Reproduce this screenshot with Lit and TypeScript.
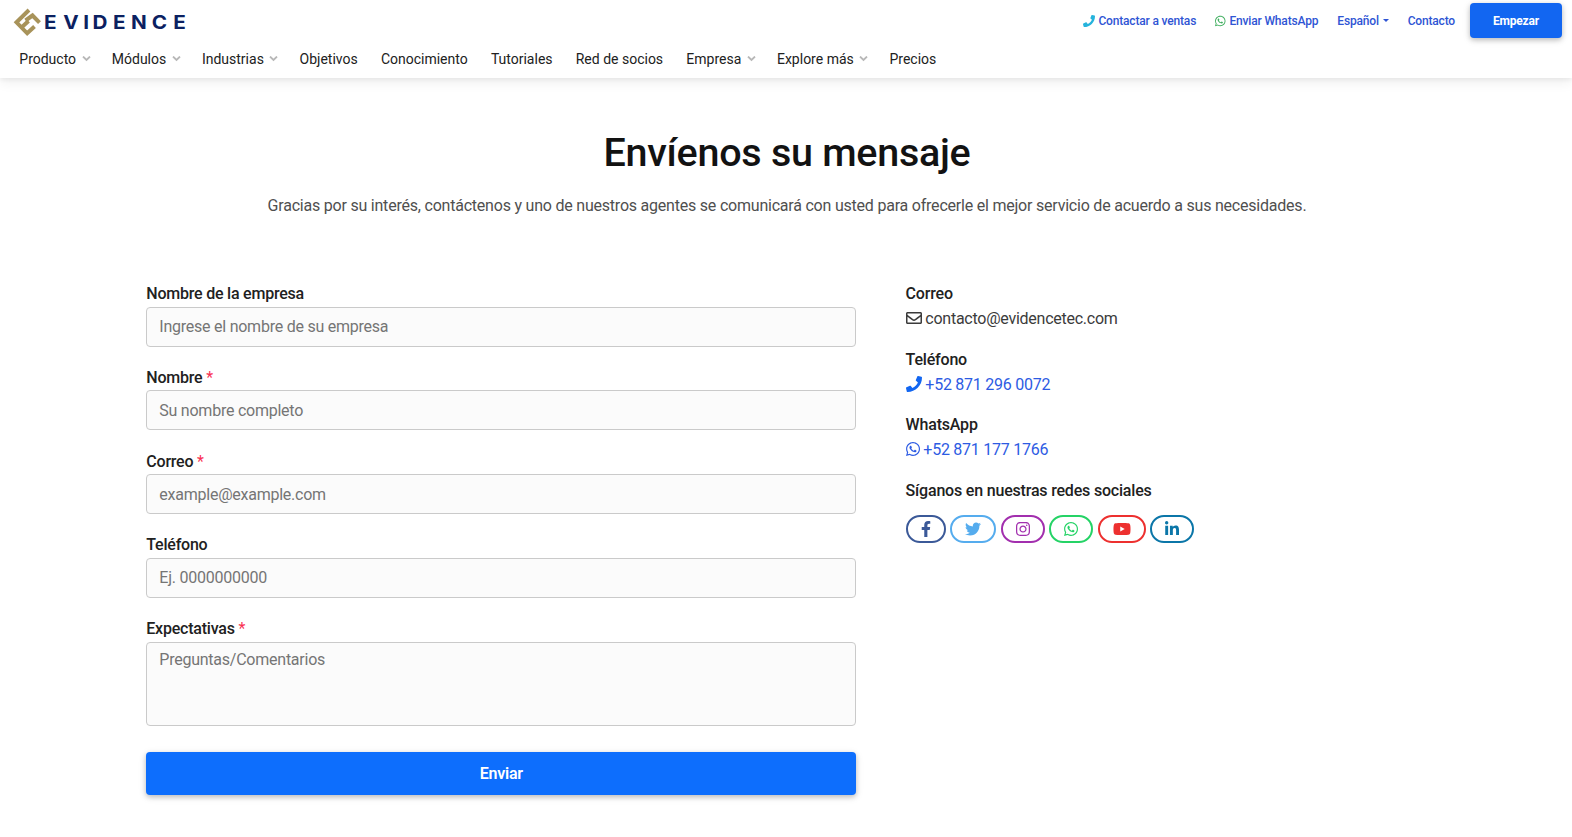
import { LitElement, html, svg, css, nothing } from 'lit';
import { customElement, property } from 'lit/decorators.js';

// [viewBox width, path], all icons share a 512 unit height
const ICONS: Record<string, [number, string]> = {
  phone: [512, 'M493.4 24.6l-104-24c-11.3-2.6-22.9 3.3-27.5 13.9l-48 112c-4.2 9.8-1.4 21.3 6.9 28l60.6 49.6c-36 76.7-98.9 140.5-177.2 177.2l-49.6-60.6c-6.8-8.3-18.2-11.1-28-6.9l-112 48C3.9 366.5-2 378.1.6 389.4l24 104C27.1 504.2 36.7 512 48 512c256.1 0 464-207.5 464-464 0-11.2-7.7-20.9-18.6-23.4z'],
  whatsapp: [448, 'M380.9 97.1C339 55.1 283.2 32 223.9 32c-122.4 0-222 99.6-222 222 0 39.1 10.2 77.3 29.6 111L0 480l117.7-30.9c32.4 17.7 68.9 27 106.1 27h.1c122.3 0 224.1-99.6 224.1-222 0-59.3-25.2-115-67.1-157zm-157 341.6c-33.2 0-65.7-8.9-94-25.7l-6.7-4-69.8 18.3L72 359.2l-4.4-7c-18.5-29.4-28.2-63.3-28.2-98.2 0-101.7 82.8-184.5 184.6-184.5 49.3 0 95.6 19.2 130.4 54.1 34.8 34.9 56.2 81.2 56.1 130.5 0 101.8-84.9 184.6-186.6 184.6zm101.2-138.2c-5.5-2.8-32.8-16.2-37.9-18-5.1-1.9-8.8-2.8-12.5 2.8-3.7 5.6-14.3 18-17.6 21.8-3.2 3.7-6.5 4.2-12 1.4-32.6-16.3-54-29.1-75.5-66-5.7-9.8 5.7-9.1 16.3-30.3 1.8-3.7.9-6.9-.5-9.7-1.4-2.8-12.5-30.1-17.1-41.2-4.5-10.8-9.1-9.3-12.5-9.5-3.2-.2-6.9-.2-10.6-.2-3.7 0-9.7 1.4-14.8 6.9-5.1 5.6-19.4 19-19.4 46.3 0 27.3 19.9 53.7 22.6 57.4 2.8 3.7 39.1 59.7 94.8 83.8 35.2 15.2 49 16.5 66.6 13.9 10.7-1.6 32.8-13.4 37.4-26.4 4.6-13 4.6-24.1 3.2-26.4-1.3-2.5-5-3.9-10.5-6.6z'],
  envelope: [512, 'M464 64H48C21.490 64 0 85.490 0 112v288c0 26.510 21.490 48 48 48h416c26.510 0 48-21.490 48-48V112c0-26.510-21.490-48-48-48zm0 48v40.805c-22.422 18.259-58.168 46.651-134.587 106.490-16.841 13.247-50.201 45.072-73.413 44.701-23.208.375-56.579-31.459-73.413-44.701C106.180 199.465 70.425 171.067 48 152.805V112h416zM48 400V214.398c22.914 18.251 55.409 43.862 104.938 82.646 21.857 17.205 60.134 55.186 103.062 54.955 42.717.231 80.509-37.199 103.053-54.947 49.528-38.783 82.032-64.401 104.947-82.653V400H48z'],
  facebook: [320, 'M279.140 288l14.220-92.660h-88.910v-60.130c0-25.350 12.420-50.060 52.240-50.060h40.420V6.260S260.430 0 225.360 0c-73.220 0-121.080 44.380-121.080 124.720v70.620H22.890V288h81.390v224h100.170V288z'],
  twitter: [512, 'M459.370 151.716c.325 4.548.325 9.097.325 13.645 0 138.720-105.583 298.558-298.558 298.558-59.452 0-114.680-17.219-161.137-47.106 8.447.974 16.568 1.299 25.340 1.299 49.055 0 94.213-16.568 130.274-44.832-46.132-.975-84.792-31.188-98.112-72.772 6.498.974 12.995 1.624 19.818 1.624 9.421 0 18.843-1.300 27.614-3.573-48.081-9.747-84.143-51.980-84.143-102.985v-1.299c13.969 7.797 30.214 12.670 47.431 13.319-28.264-18.843-46.781-51.005-46.781-87.391 0-19.492 5.197-37.360 14.294-52.954 51.655 63.675 129.300 105.258 216.365 109.807-1.624-7.797-2.599-15.918-2.599-24.040 0-57.828 46.782-104.934 104.934-104.934 30.213 0 57.502 12.670 76.670 33.137 23.715-4.548 46.456-13.320 66.599-25.340-7.798 24.366-24.366 44.833-46.132 57.827 21.117-2.273 41.584-8.122 60.426-16.243-14.292 20.791-32.161 39.308-52.628 54.253z'],
  instagram: [448, 'M224.1 141c-63.6 0-114.9 51.3-114.9 114.9s51.3 114.9 114.9 114.9S339 319.5 339 255.9 287.7 141 224.1 141zm0 189.6c-41.1 0-74.7-33.5-74.7-74.7s33.5-74.7 74.7-74.7 74.7 33.5 74.7 74.7-33.6 74.7-74.7 74.7zm146.4-194.3c0 14.9-12 26.8-26.8 26.8-14.9 0-26.8-12-26.8-26.8s12-26.8 26.8-26.8 26.8 12 26.8 26.8zm76.1 27.2c-1.7-35.9-9.9-67.7-36.2-93.9-26.2-26.2-58-34.4-93.9-36.2-37-2.1-147.9-2.1-184.9 0-35.8 1.7-67.6 9.9-93.9 36.1s-34.4 58-36.2 93.9c-2.1 37-2.1 147.9 0 184.9 1.7 35.9 9.9 67.7 36.2 93.9s58 34.4 93.9 36.2c37 2.1 147.9 2.1 184.9 0 35.9-1.7 67.7-9.9 93.9-36.2 26.2-26.2 34.4-58 36.2-93.9 2.1-37 2.1-147.8 0-184.8zM398.8 388c-7.8 19.6-22.9 34.7-42.6 42.6-29.5 11.7-99.5 9-132.1 9s-102.7 2.6-132.1-9c-19.6-7.8-34.7-22.9-42.6-42.6-11.7-29.5-9-99.5-9-132.1s-2.6-102.7 9-132.1c7.8-19.6 22.9-34.7 42.6-42.6 29.5-11.7 99.5-9 132.1-9s102.7-2.6 132.1 9c19.6 7.8 34.7 22.9 42.6 42.6 11.7 29.5 9 99.5 9 132.1s2.7 102.7-9 132.1z'],
  youtube: [576, 'M549.655 124.083c-6.281-23.650-24.787-42.276-48.284-48.597C458.781 64 288 64 288 64S117.220 64 74.629 75.486c-23.497 6.322-42.003 24.947-48.284 48.597-11.412 42.867-11.412 132.305-11.412 132.305s0 89.438 11.412 132.305c6.281 23.650 24.787 41.500 48.284 47.821C117.220 448 288 448 288 448s170.780 0 213.371-11.486c23.497-6.321 42.003-24.171 48.284-47.821 11.412-42.867 11.412-132.305 11.412-132.305s0-89.438-11.412-132.305zm-317.510 213.508V175.185l142.739 81.205-142.739 81.201z'],
  linkedin: [448, 'M100.280 448H7.400V148.900h92.880zM53.790 108.100C24.090 108.100 0 83.500 0 53.800a53.790 53.790 0 0 1 107.580 0c0 29.700-24.100 54.300-53.790 54.300zM447.900 448h-92.680V302.400c0-34.700-.7-79.200-48.290-79.200-48.290 0-55.690 37.700-55.690 76.700V448h-92.780V148.900h89.080v40.800h1.300c12.400-23.500 42.690-48.300 87.880-48.300 94 0 111.280 61.900 111.280 142.300V448z'],
};

const NAV = [
  { label: 'Producto', menu: true },
  { label: 'Módulos', menu: true },
  { label: 'Industrias', menu: true },
  { label: 'Objetivos' },
  { label: 'Conocimiento' },
  { label: 'Tutoriales' },
  { label: 'Red de socios' },
  { label: 'Empresa', menu: true },
  { label: 'Explore más', menu: true },
  { label: 'Precios' },
];

const FIELDS = [
  { label: 'Nombre de la empresa', placeholder: 'Ingrese el nombre de su empresa' },
  { label: 'Nombre', placeholder: 'Su nombre completo', required: true },
  { label: 'Correo', placeholder: 'example@example.com', required: true },
  { label: 'Teléfono', placeholder: 'Ej. 0000000000' },
  { label: 'Expectativas', placeholder: 'Preguntas/Comentarios', required: true, multiline: true },
];

const SOCIAL = ['facebook', 'twitter', 'instagram', 'whatsapp', 'youtube', 'linkedin'];

@customElement('app-icon')
export class AppIcon extends LitElement {
  @property() name = '';

  static styles = css`
    :host {
      display: inline-block;
      height: 1em;
      line-height: 1;
      vertical-align: -0.125em;
    }

    .glyph {
      display: block;
      height: 1em;
      fill: currentColor;
      overflow: visible;
    }
  `;

  render() {
    const [width, path] = ICONS[this.name];
    return html`<svg class="glyph" viewBox="0 0 ${width} 512">${svg`<path d=${path}></path>`}</svg>`;
  }
}

@customElement('site-header')
export class SiteHeader extends LitElement {
  static styles = css`
    :host {
      display: block;
      height: 78px;
      background: #fff;
      box-shadow: 0 4px 12px rgba(0, 0, 0, 0.07), 0 2px 4px rgba(0, 0, 0, 0.05);
      font-family: Roboto, sans-serif;
    }

    .top {
      display: flex;
      justify-content: space-between;
      align-items: flex-start;
      height: 42px;
      padding: 3px 10px 0 13px;
      box-sizing: border-box;
    }

    .logo {
      display: block;
      margin-top: 4px;
    }

    .word {
      font: 700 18.800px Inter, sans-serif;
      fill: #0b2161;
    }

    .links {
      display: flex;
      align-items: center;
      height: 35px;
      font-size: 12px;
      font-weight: 500;
      letter-spacing: -0.170px;
    }

    .links a {
      display: flex;
      align-items: center;
      gap: 3.800px;
      margin-right: 19px;
      color: #2f55d4;
      text-decoration: none;
    }

    .links a.last {
      margin-right: 15px;
    }

    .cyan {
      color: #25b3dc;
    }

    .green {
      color: #3fae5e;
    }

    .caret {
      border: 3.500px solid transparent;
      border-top-color: currentColor;
      border-bottom: 0;
    }

    .start {
      width: 92px;
      height: 35px;
      padding: 0;
      border: 0;
      border-radius: 4px;
      background: #1266f1;
      box-shadow: 0 2px 5px rgba(0, 0, 0, 0.2), 0 2px 8px rgba(0, 0, 0, 0.1);
      color: #fff;
      font: 700 12px Roboto, sans-serif;
      letter-spacing: -0.200px;
    }

    .nav {
      display: flex;
      gap: 23.200px;
      padding-left: 19.300px;
      font-size: 14px;
      line-height: 34px;
      color: #212121;
    }

    .item {
      display: flex;
      align-items: center;
      gap: 5.500px;
      white-space: nowrap;
    }

    .chevron {
      margin-right: -2px;
      fill: none;
      stroke: #b8b8b8;
      stroke-width: 1.800;
    }
  `;

  render() {
    return html`
      <div class="top">
        <svg class="logo" width="174" height="30" viewBox="13 7 174 30">
          <g fill="none" stroke="#a8935a" stroke-width="4">
            <path d="M29 10L16.500 22.300L27.200 33.300L34.500 26.500"></path>
            <path d="M21.500 27.500L28.500 21"></path>
            <path d="M25.500 20.500L32.500 15.500L39.500 22.700"></path>
          </g>
          <text class="word" transform="scale(1.1 1)" y="29.300" x="40 57.600 75.700 84 102.700 119 138 157.400">EVIDENCE</text>
        </svg>
        <div class="links">
          <a><app-icon class="cyan" name="phone"></app-icon>Contactar a ventas</a>
          <a><app-icon class="green" name="whatsapp"></app-icon>Enviar WhatsApp</a>
          <a>Español<span class="caret"></span></a>
          <a class="last">Contacto</a>
          <button class="start">Empezar</button>
        </div>
      </div>
      <nav class="nav">
        ${NAV.map((item) => html`
          <span class="item">
            ${item.label}
            ${item.menu
              ? html`<svg class="chevron" width="9" height="6" viewBox="0 0 9 6"><path d="M1 0.500L4.500 4L8 0.500"></path></svg>`
              : nothing}
          </span>
        `)}
      </nav>
    `;
  }
}

@customElement('contact-form')
export class ContactForm extends LitElement {
  static styles = css`
    :host {
      display: block;
      font-family: Roboto, sans-serif;
    }

    .field {
      height: 83.800px;
    }

    .label {
      display: block;
      height: 25.600px;
      line-height: 25px;
      font-size: 16px;
      font-weight: 500;
      letter-spacing: -0.220px;
      color: #212121;
    }

    .required {
      color: #f93154;
      font-weight: 400;
    }

    .input {
      display: block;
      width: 100%;
      height: 40px;
      box-sizing: border-box;
      padding: 5px 12px;
      border: 1px solid #cacaca;
      border-radius: 4px;
      background: #fbfbfb;
      font: 400 16px/24px Roboto, sans-serif;
      letter-spacing: -0.240px;
      resize: none;
    }

    .input::placeholder {
      color: #757575;
      opacity: 1;
    }

    .area {
      height: 84px;
    }

    .submit {
      width: 100%;
      height: 43px;
      margin-top: 52px;
      padding: 0;
      border: 0;
      border-radius: 4px;
      background: #0d6efd;
      box-shadow: 0 2px 5px rgba(0, 0, 0, 0.2), 0 2px 8px rgba(0, 0, 0, 0.1);
      color: #fff;
      font: 600 16px Roboto, sans-serif;
      letter-spacing: -0.250px;
    }
  `;

  render() {
    return html`
      ${FIELDS.map((field) => html`
        <div class="field">
          <label class="label">
            ${field.label}
            ${field.required ? html`<span class="required">*</span>` : nothing}
          </label>
          ${field.multiline
            ? html`<textarea class="input area" placeholder=${field.placeholder}></textarea>`
            : html`<input class="input" placeholder=${field.placeholder}>`}
        </div>
      `)}
      <button class="submit">Enviar</button>
    `;
  }
}

@customElement('contact-info')
export class ContactInfo extends LitElement {
  static styles = css`
    :host {
      display: block;
      font: 400 16px/25.200px Roboto, sans-serif;
      letter-spacing: -0.250px;
      color: #3b3b3b;
    }

    .block {
      margin-bottom: 15.200px;
      white-space: nowrap;
    }

    .title {
      font-weight: 500;
      letter-spacing: -0.190px;
      color: #212121;
    }

    .link {
      color: #2d5be3;
    }

    .solid {
      color: #1266f1;
    }

    .social {
      display: flex;
      gap: 4.500px;
      margin-top: 12px;
    }

    .pill {
      display: flex;
      align-items: center;
      height: 28px;
      box-sizing: border-box;
      padding: 0 13px;
      border: 2px solid currentColor;
      border-radius: 14px;
    }

    .facebook { color: #3b5998; }
    .twitter { color: #55acee; }
    .instagram { color: #a22fae; }
    .whatsapp { color: #25d366; }
    .youtube { color: #ed302f; }
    .linkedin { color: #0b76a8; }
  `;

  render() {
    return html`
      <div class="block">
        <div class="title">Correo</div>
        <div><app-icon name="envelope"></app-icon> contacto@evidencetec.com</div>
      </div>
      <div class="block">
        <div class="title">Teléfono</div>
        <div class="link"><app-icon class="solid" name="phone"></app-icon> +52 871 296 0072</div>
      </div>
      <div class="block">
        <div class="title">WhatsApp</div>
        <div class="link"><app-icon name="whatsapp"></app-icon> +52 871 177 1766</div>
      </div>
      <div class="block">
        <div class="title">Síganos en nuestras redes sociales</div>
        <div class="social">
          ${SOCIAL.map((name) => html`<span class="pill ${name}"><app-icon name=${name}></app-icon></span>`)}
        </div>
      </div>
    `;
  }
}

@customElement('app-root')
export class AppRoot extends LitElement {
  static styles = css`
    :host {
      display: block;
      height: 837px;
      overflow: hidden;
      background: #fff;
      font-family: Roboto, sans-serif;
    }

    .intro {
      padding-top: 51px;
      text-align: center;
    }

    .heading {
      margin: 0;
      padding-left: 2px;
      font-size: 39.500px;
      font-weight: 500;
      line-height: 48px;
      letter-spacing: -0.280px;
      color: #121212;
    }

    .lead {
      margin: 16px 0 0;
      padding-left: 2px;
      font-size: 16px;
      line-height: 26px;
      letter-spacing: -0.215px;
      color: #4f4f4f;
    }

    .columns {
      display: grid;
      grid-template-columns: 710px 1fr;
      column-gap: 49.300px;
      padding: 62px 0 0 146.300px;
    }
  `;

  render() {
    return html`
      <site-header></site-header>
      <section class="intro">
        <h1 class="heading">Envíenos su mensaje</h1>
        <p class="lead">
          Gracias por su interés, contáctenos y uno de nuestros agentes se comunicará con usted para
          ofrecerle el mejor servicio de acuerdo a sus necesidades.
        </p>
      </section>
      <main class="columns">
        <contact-form></contact-form>
        <contact-info></contact-info>
      </main>
    `;
  }
}
